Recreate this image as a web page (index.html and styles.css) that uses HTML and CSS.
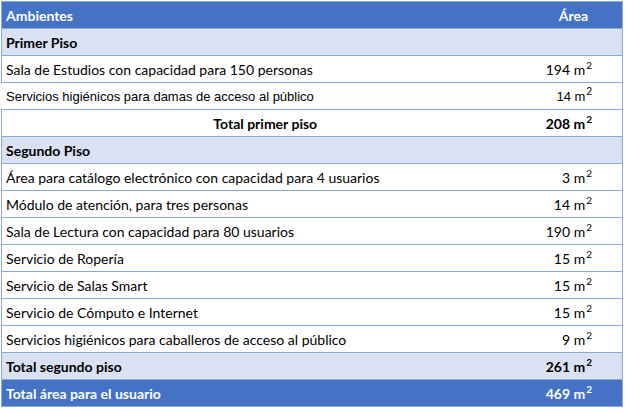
FILE: index.html
```html
<!DOCTYPE html>
<html lang="es">
<head>
<meta charset="utf-8">
<title>Ambientes</title>
<link rel="stylesheet" href="styles.css">
</head>
<body>
<table class="tbl">
  <tr class="head"><td class="name">Ambientes</td><td class="area">Área</td></tr>
  <tr class="band"><td class="name b">Primer Piso</td><td class="area"></td></tr>
  <tr><td class="name">Sala de Estudios con capacidad para 150 personas</td><td class="area">194 m<sup>2</sup></td></tr>
  <tr class="arial"><td class="name">Servicios higiénicos para damas de acceso al público</td><td class="area">14 m<sup>2</sup></td></tr>
  <tr><td class="name b center">Total primer piso</td><td class="area b">208 m<sup>2</sup></td></tr>
  <tr class="band"><td class="name b">Segundo Piso</td><td class="area"></td></tr>
  <tr><td class="name">Área para catálogo electrónico con capacidad para 4 usuarios</td><td class="area">3 m<sup>2</sup></td></tr>
  <tr><td class="name">Módulo de atención, para tres personas</td><td class="area">14 m<sup>2</sup></td></tr>
  <tr><td class="name">Sala de Lectura con capacidad para 80 usuarios</td><td class="area">190 m<sup>2</sup></td></tr>
  <tr><td class="name">Servicio de Ropería</td><td class="area">15 m<sup>2</sup></td></tr>
  <tr><td class="name">Servicio de Salas Smart</td><td class="area">15 m<sup>2</sup></td></tr>
  <tr><td class="name">Servicio de Cómputo e Internet</td><td class="area">15 m<sup>2</sup></td></tr>
  <tr><td class="name">Servicios higiénicos para caballeros de acceso al público</td><td class="area">9 m<sup>2</sup></td></tr>
  <tr class="band"><td class="name b">Total segundo piso</td><td class="area b">261 m<sup>2</sup></td></tr>
  <tr class="foot"><td class="name">Total área para el usuario</td><td class="area">469 m<sup>2</sup></td></tr>
</table>
</body>
</html>
```
FILE: styles.css
```css
html, body {
  margin: 0;
  padding: 0;
  background: #ffffff;
}
body {
  padding: 1px 0 0 1px;
  font-family: Lato, "Liberation Sans", sans-serif;
  font-size: 14px;
  color: #000000;
}
.tbl {
  border-collapse: collapse;
  width: 622px;
  border: 1px solid #8EA9DB;
}
.tbl td {
  height: 26px;
  padding: 0;
  border-bottom: 1px solid #8EA9DB;
  white-space: nowrap;
  vertical-align: middle;
}
.tbl td.name {
  padding-left: 4px;
  width: 526px;
}
.tbl td.area {
  text-align: right;
  padding-right: 30px;
}
.tbl td.center {
  text-align: center;
  padding-left: 0;
  padding-right: 4px;
}
.b {
  font-weight: bold;
}
.head td, .foot td {
  background: #4472C4;
  color: #ffffff;
  font-weight: bold;
}
.head td.area {
  padding-right: 34px;
}
.band td {
  background: #D9E1F2;
}
.arial td {
  font-family: "Liberation Sans", Arial, sans-serif;
  font-size: 13px;
  border-left: 1px solid #ffffff;
}
sup {
  font-size: 10px;
  line-height: 0;
  vertical-align: 6px;
  margin-left: 1px;
}
```
